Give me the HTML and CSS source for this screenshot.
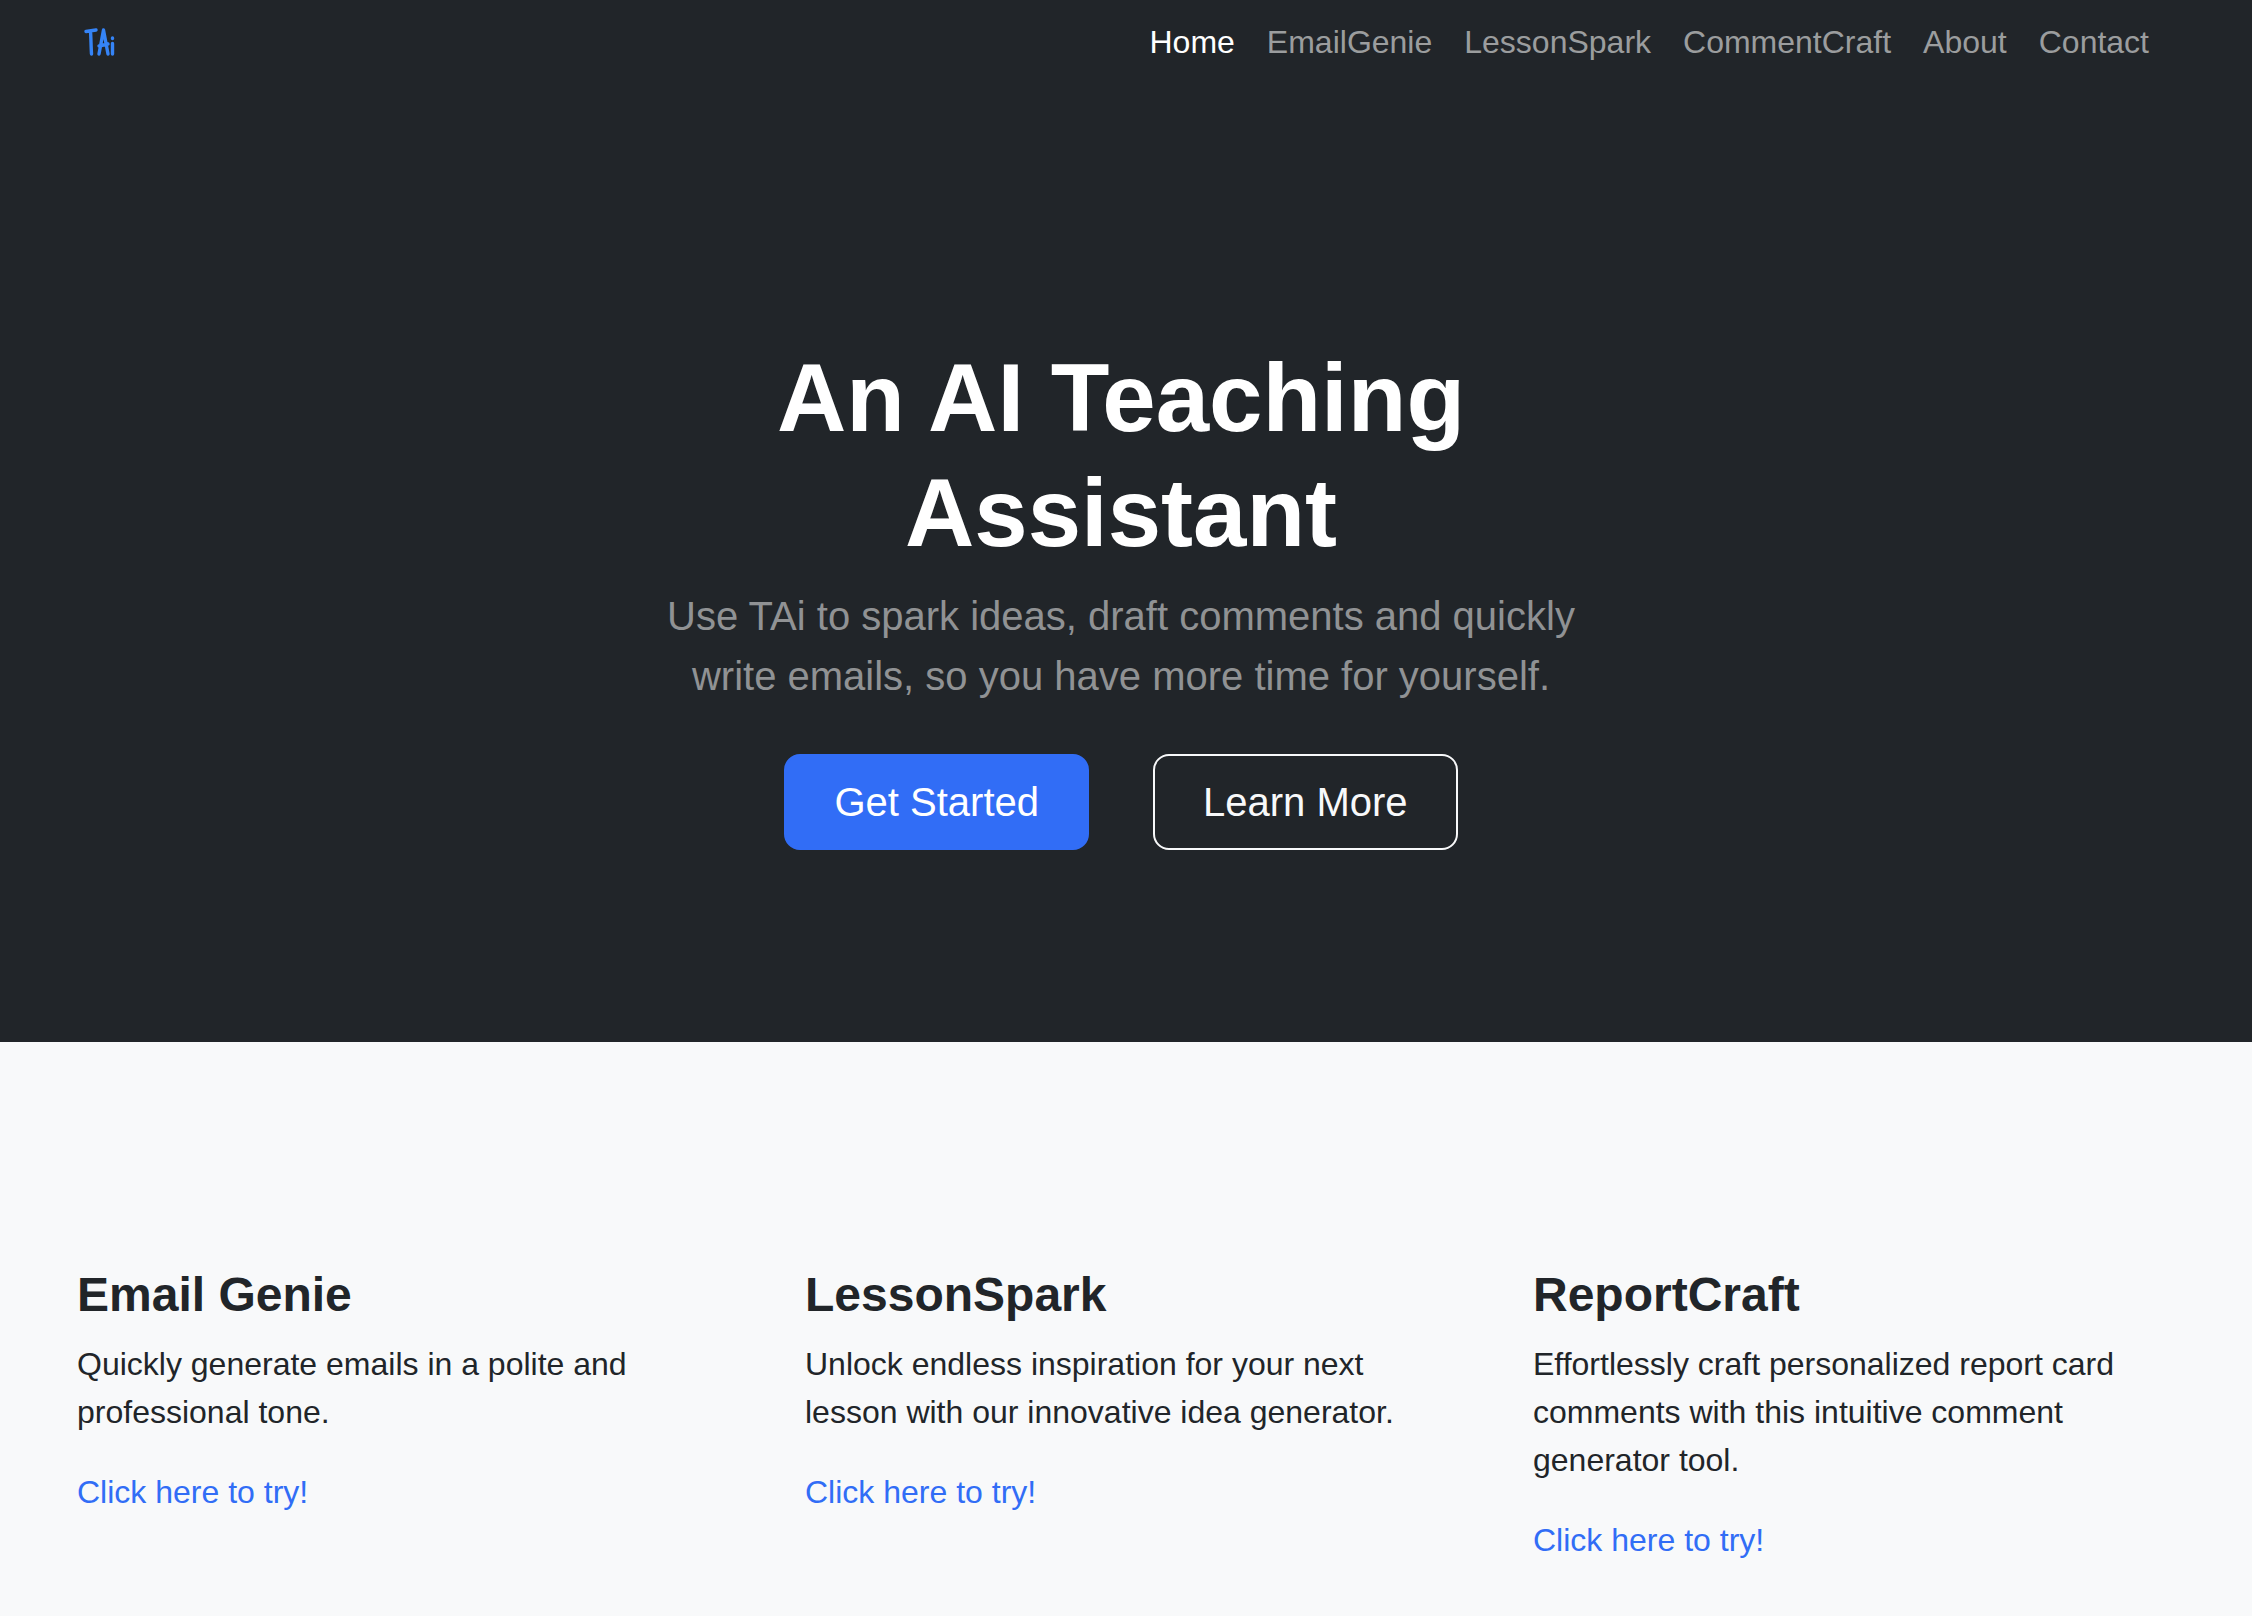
FILE: index.html
```html
<!DOCTYPE html>
<html lang="en">
<head>
<meta charset="utf-8">
<meta name="viewport" content="width=device-width, initial-scale=1">
<title>TAi</title>
<link rel="stylesheet" href="styles.css">
</head>
<body>
<nav class="navbar">
  <div class="container navbar-inner">
    <a class="brand" href="#" aria-label="TAi home">
      <svg class="brand-logo" viewBox="0 0 46 40" fill="none" stroke="currentColor" stroke-width="3.400" stroke-linecap="round" stroke-linejoin="round">
        <path d="M9 9.500 L19 8 M13.500 9 C14 16 14 24 14.500 32"/>
        <path d="M22 32 L26.500 8 L31 32 M22 24 L31 22"/>
        <path d="M35.500 21.500 V32 M35.500 16 V16.500"/>
      </svg>
    </a>
    <ul class="nav-list">
      <li><a class="nav-link active" href="#" aria-current="page">Home</a></li>
      <li><a class="nav-link" href="#">EmailGenie</a></li>
      <li><a class="nav-link" href="#">LessonSpark</a></li>
      <li><a class="nav-link" href="#">CommentCraft</a></li>
      <li><a class="nav-link" href="#">About</a></li>
      <li><a class="nav-link" href="#">Contact</a></li>
    </ul>
  </div>
</nav>
<header class="hero">
  <div class="container">
    <div class="hero-content">
      <h1 class="hero-title">An AI Teaching Assistant</h1>
      <p class="lead">Use TAi to spark ideas, draft comments and quickly write emails, so you have more time for yourself.</p>
      <div class="hero-actions">
        <a class="btn btn-primary" href="#features">Get Started</a>
        <a class="btn btn-outline" href="#">Learn More</a>
      </div>
    </div>
  </div>
</header>
<main class="features" id="features">
  <div class="container feature-grid">
    <section>
      <h2 class="feature-title">Email Genie</h2>
      <p class="feature-text">Quickly generate emails in a polite and professional tone.</p>
      <a class="feature-link" href="#">Click here to try!</a>
    </section>
    <section>
      <h2 class="feature-title">LessonSpark</h2>
      <p class="feature-text">Unlock endless inspiration for your next lesson with our innovative idea generator.</p>
      <a class="feature-link" href="#">Click here to try!</a>
    </section>
    <section>
      <h2 class="feature-title">ReportCraft</h2>
      <p class="feature-text">Effortlessly craft personalized report card comments with this intuitive comment generator tool.</p>
      <a class="feature-link" href="#">Click here to try!</a>
    </section>
  </div>
</main>
</body>
</html>
```
FILE: styles.css
```css
* { box-sizing: border-box; }

body {
  margin: 0;
  background: #f8f9fa;
  color: #212529;
  font-family: "Liberation Sans", Arial, sans-serif;
  font-size: 32px;
  line-height: 48px;
}

h1, h2, p, ul { margin: 0; padding: 0; }
a { text-decoration: none; }

.container { padding: 0 87px 0 77px; }

.navbar { background: #212529; }

.navbar-inner {
  display: flex;
  align-items: center;
  justify-content: space-between;
  padding-top: 2px;
  padding-bottom: 6px;
}

.brand { display: flex; color: #3584f7; }
.brand-logo { width: 46px; height: 40px; }
.nav-list { display: flex; list-style: none; }
.nav-link { display: block; padding: 16px; color: #9b9d9e; }
.nav-link.active { color: #fff; }

.hero {
  padding: 252px 0 192px;
  background: #212529;
  text-align: center;
}

.hero-content { max-width: 948px; margin: 0 auto; }

.hero-title {
  margin-bottom: 16px;
  color: #fff;
  font-size: 96px;
  line-height: 115px;
}

.lead {
  margin-bottom: 48px;
  color: #909294;
  font-size: 40px;
  line-height: 60px;
}

.hero-actions { display: flex; justify-content: center; gap: 64px; }

.btn {
  padding: 16px 48px;
  border: 2px solid;
  border-radius: 16px;
  font-size: 40px;
  line-height: 60px;
}

.btn-primary { border-color: #316df6; background: #316df6; color: #fff; }
.btn-outline { border-color: #f8f9fa; color: #f8f9fa; }

.features { padding: 224px 0 48px; }

.feature-grid {
  display: grid;
  grid-template-columns: repeat(3, 1fr);
  gap: 96px;
}

.feature-title { margin-bottom: 16px; font-size: 48px; line-height: 58px; }
.feature-text { margin-bottom: 32px; }
.feature-link { color: #316df6; }
```
